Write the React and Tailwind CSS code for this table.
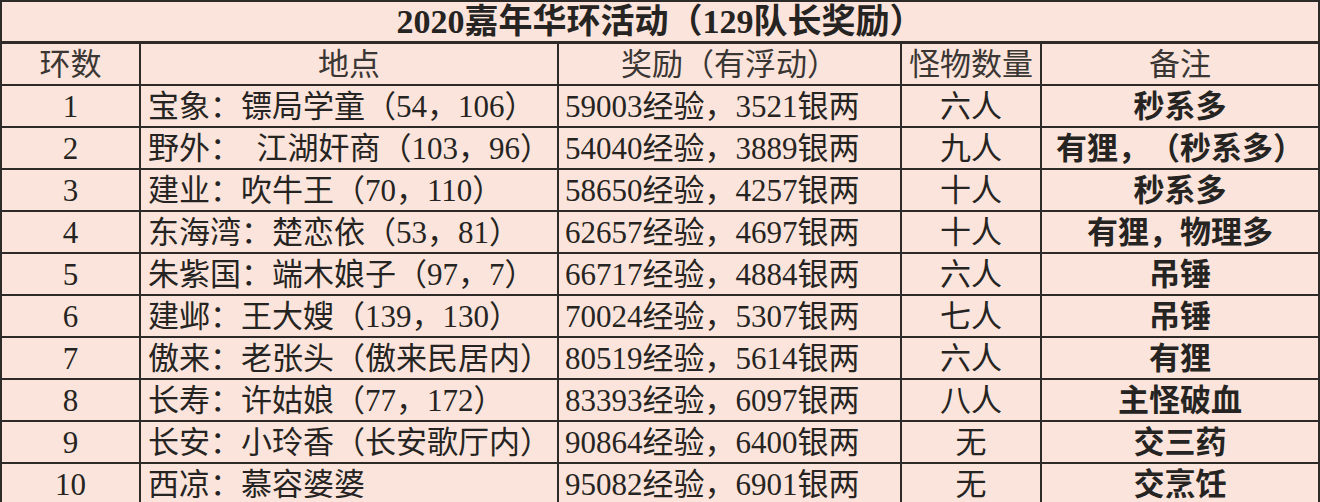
import React from 'react';

const rows = [
  { n: '1', place: '宝象：镖局学童（54，106）', reward: '59003经验，3521银两', count: '六人', note: '秒系多' },
  { n: '2', place: '野外：\u00a0\u00a0江湖奸商（103，96）', reward: '54040经验，3889银两', count: '九人', note: '有狸，（秒系多）' },
  { n: '3', place: '建业：吹牛王（70，110）', reward: '58650经验，4257银两', count: '十人', note: '秒系多' },
  { n: '4', place: '东海湾：楚恋依（53，81）', reward: '62657经验，4697银两', count: '十人', note: '有狸，物理多' },
  { n: '5', place: '朱紫国：端木娘子（97，7）', reward: '66717经验，4884银两', count: '六人', note: '吊锤' },
  { n: '6', place: '建邺：王大嫂（139，130）', reward: '70024经验，5307银两', count: '七人', note: '吊锤' },
  { n: '7', place: '傲来：老张头（傲来民居内）', reward: '80519经验，5614银两', count: '六人', note: '有狸' },
  { n: '8', place: '长寿：许姑娘（77，172）', reward: '83393经验，6097银两', count: '八人', note: '主怪破血' },
  { n: '9', place: '长安：小玲香（长安歌厅内）', reward: '90864经验，6400银两', count: '无', note: '交三药' },
  { n: '10', place: '西凉：慕容婆婆', reward: '95082经验，6901银两', count: '无', note: '交烹饪' },
];

const cell = 'bg-[#fbe4db] flex items-center whitespace-pre';

export default function App() {
  return (
    <div
      className="w-[1320px] h-[502px] overflow-hidden bg-[#2e2a27] p-[2px] pb-0 text-[31px] leading-none text-[#262422] [text-spacing-trim:space-all]"
      style={{ fontFamily: '"Liberation Serif", "Noto Sans CJK SC", serif' }}
    >
      <div className="grid grid-cols-[137px_416px_341px_138px_1fr] auto-rows-[40px] gap-[2px]">
        {/* Title */}
        <div className={`${cell} col-span-5 h-[39px] justify-center font-bold text-[34px]`}>
          2020嘉年华环活动（129队长奖励）
        </div>

        {/* Header */}
        <div className={`${cell} justify-center text-[#3a3634]`}>环数</div>
        <div className={`${cell} justify-center text-[#3a3634]`}>地点</div>
        <div className={`${cell} justify-center text-[#3a3634]`}>奖励（有浮动）</div>
        <div className={`${cell} justify-center text-[#3a3634]`}>怪物数量</div>
        <div className={`${cell} justify-center text-[#3a3634]`}>备注</div>

        {rows.map((r) => (
          <React.Fragment key={r.n}>
            <div className={`${cell} justify-center`}>{r.n}</div>
            <div className={`${cell} pl-[7px]`}>{r.place}</div>
            <div className={`${cell} pl-[6px]`}>{r.reward}</div>
            <div className={`${cell} justify-center`}>{r.count}</div>
            <div className={`${cell} justify-center font-bold`}>{r.note}</div>
          </React.Fragment>
        ))}
      </div>
    </div>
  );
}
